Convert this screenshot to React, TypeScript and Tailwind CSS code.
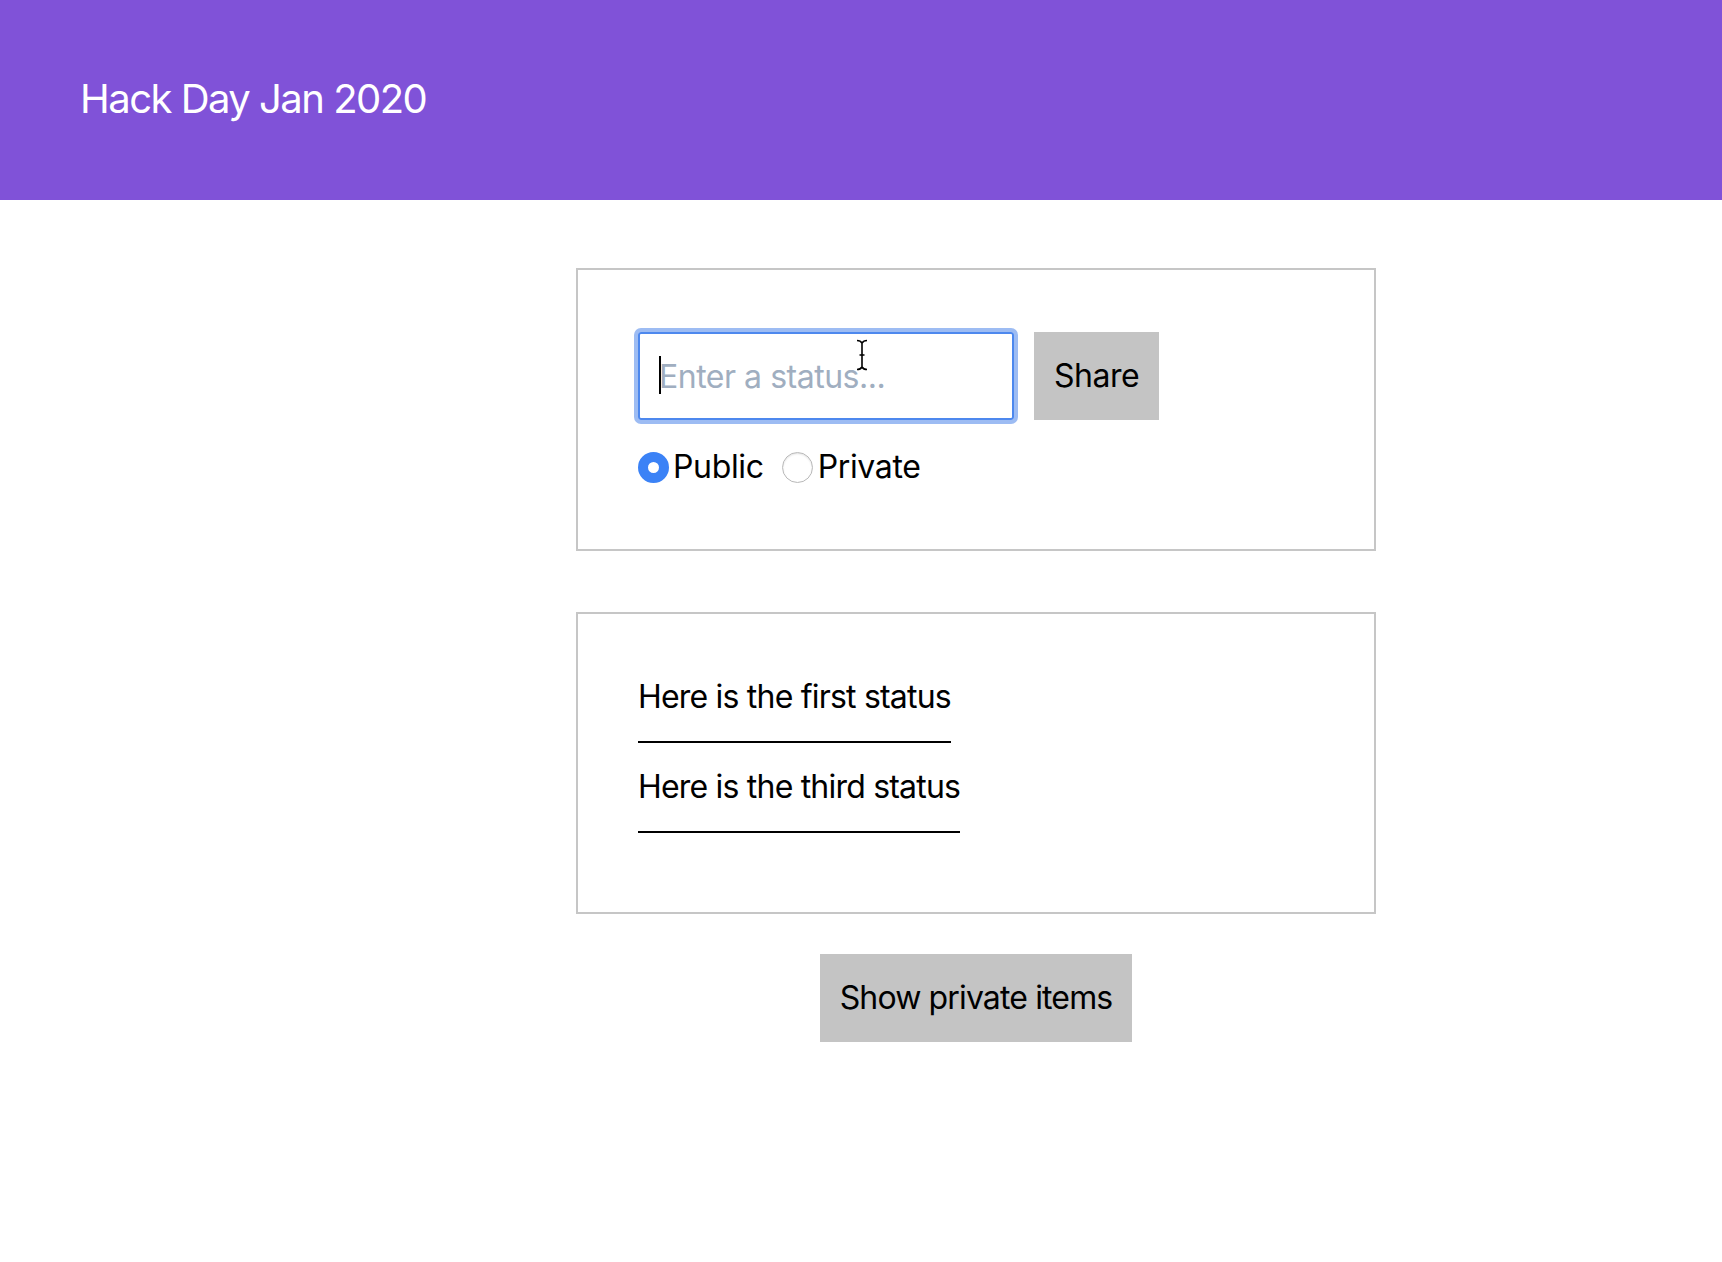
import React, { useState } from 'react';

const statuses = [
  { id: 1, text: 'Here is the first status', isPrivate: false },
  { id: 2, text: 'Here is the second status', isPrivate: true },
  { id: 3, text: 'Here is the third status', isPrivate: false },
];

export default function App() {
  const [visibility, setVisibility] = useState('public');
  const [showPrivate, setShowPrivate] = useState(false);

  const visible = statuses.filter((s) => showPrivate || !s.isPrivate);

  return (
    <div className="min-h-screen bg-white text-black font-['Inter','Liberation_Sans',sans-serif] tracking-[-0.022em]">
      {/* Header */}
      <header className="h-[200px] bg-[#8052d8] px-20 pt-[69px]">
        <h1 className="text-[40px] leading-[60px] tracking-[-0.038em] text-white">Hack Day Jan 2020</h1>
      </header>

      <main className="ml-[576px] w-[800px] pt-[68px]">
        {/* Compose */}
        <section className="border-2 border-[#c6c6c6] px-[60px] pt-[62px] pb-[58px]">
          <div className="flex gap-5">
            <div className="relative">
              <input
                type="text"
                placeholder="Enter a status..."
                className="h-[88px] w-[376px] rounded-[3px] border-2 border-[#4d88ee] px-[19px] text-[32px] leading-[48px] tracking-[-0.015em] shadow-[0_0_0_4px_#9dbcf3] outline-none placeholder:text-[#a0aec0]"
              />
              {/* caret + mouse cursor from the screenshot */}
              <span className="pointer-events-none absolute left-[21px] top-[24px] h-[38px] w-[2px] bg-black" />
              <svg className="pointer-events-none absolute left-[218px] top-[7px]" width="12" height="32" viewBox="0 0 12 32">
                <path d="M1 1.5c2.5 0 4 .8 5 2.5 1-1.7 2.5-2.5 5-2.5M6 4v24M1 30.5c2.5 0 4-.8 5-2.5 1 1.7 2.5 2.5 5 2.5M3.5 16h5" fill="none" stroke="#fff" strokeWidth="3.5" />
                <path d="M1 1.5c2.5 0 4 .8 5 2.5 1-1.7 2.5-2.5 5-2.5M6 4v24M1 30.5c2.5 0 4-.8 5-2.5 1 1.7 2.5 2.5 5 2.5M3.5 16h5" fill="none" stroke="#000" strokeWidth="1.6" />
              </svg>
            </div>
            <button className="h-[88px] bg-[#c4c4c4] px-5 text-[32px] leading-[48px] tracking-[-0.015em]">Share</button>
          </div>

          <div className="mt-[23px] flex h-[48px] items-center text-[32px] leading-[48px]">
            <label className="flex items-center">
              <input
                type="radio"
                name="visibility"
                checked={visibility === 'public'}
                onChange={() => setVisibility('public')}
                className="h-[31px] w-[31px] appearance-none rounded-full border border-[#b9b9b9] bg-white shadow-[inset_0_1px_2px_rgba(0,0,0,0.12)] checked:border-[10px] checked:border-[#3b82f6] checked:shadow-none"
              />
              <span className="ml-[4px]">Public</span>
            </label>
            <label className="ml-[18px] flex items-center">
              <input
                type="radio"
                name="visibility"
                checked={visibility === 'private'}
                onChange={() => setVisibility('private')}
                className="h-[31px] w-[31px] appearance-none rounded-full border border-[#b9b9b9] bg-white shadow-[inset_0_1px_2px_rgba(0,0,0,0.12)] checked:border-[10px] checked:border-[#3b82f6] checked:shadow-none"
              />
              <span className="ml-[5px]">Private</span>
            </label>
          </div>
        </section>

        {/* Status list */}
        <section className="mt-[61px] flex flex-col items-start border-2 border-[#c6c6c6] px-[60px] pt-[59px] pb-[59px]">
          {visible.map((s) => (
            <div key={s.id} className="mb-[20px] border-b-2 border-black pb-[20px] text-[32px] leading-[48px] tracking-[-0.025em]">
              {s.text}
            </div>
          ))}
        </section>

        <div className="mt-[40px] flex justify-center">
          <button
            onClick={() => setShowPrivate(!showPrivate)}
            className="h-[88px] bg-[#c4c4c4] px-5 text-[32px] leading-[48px] tracking-[-0.027em]"
          >
            Show private items
          </button>
        </div>
      </main>
    </div>
  );
}
